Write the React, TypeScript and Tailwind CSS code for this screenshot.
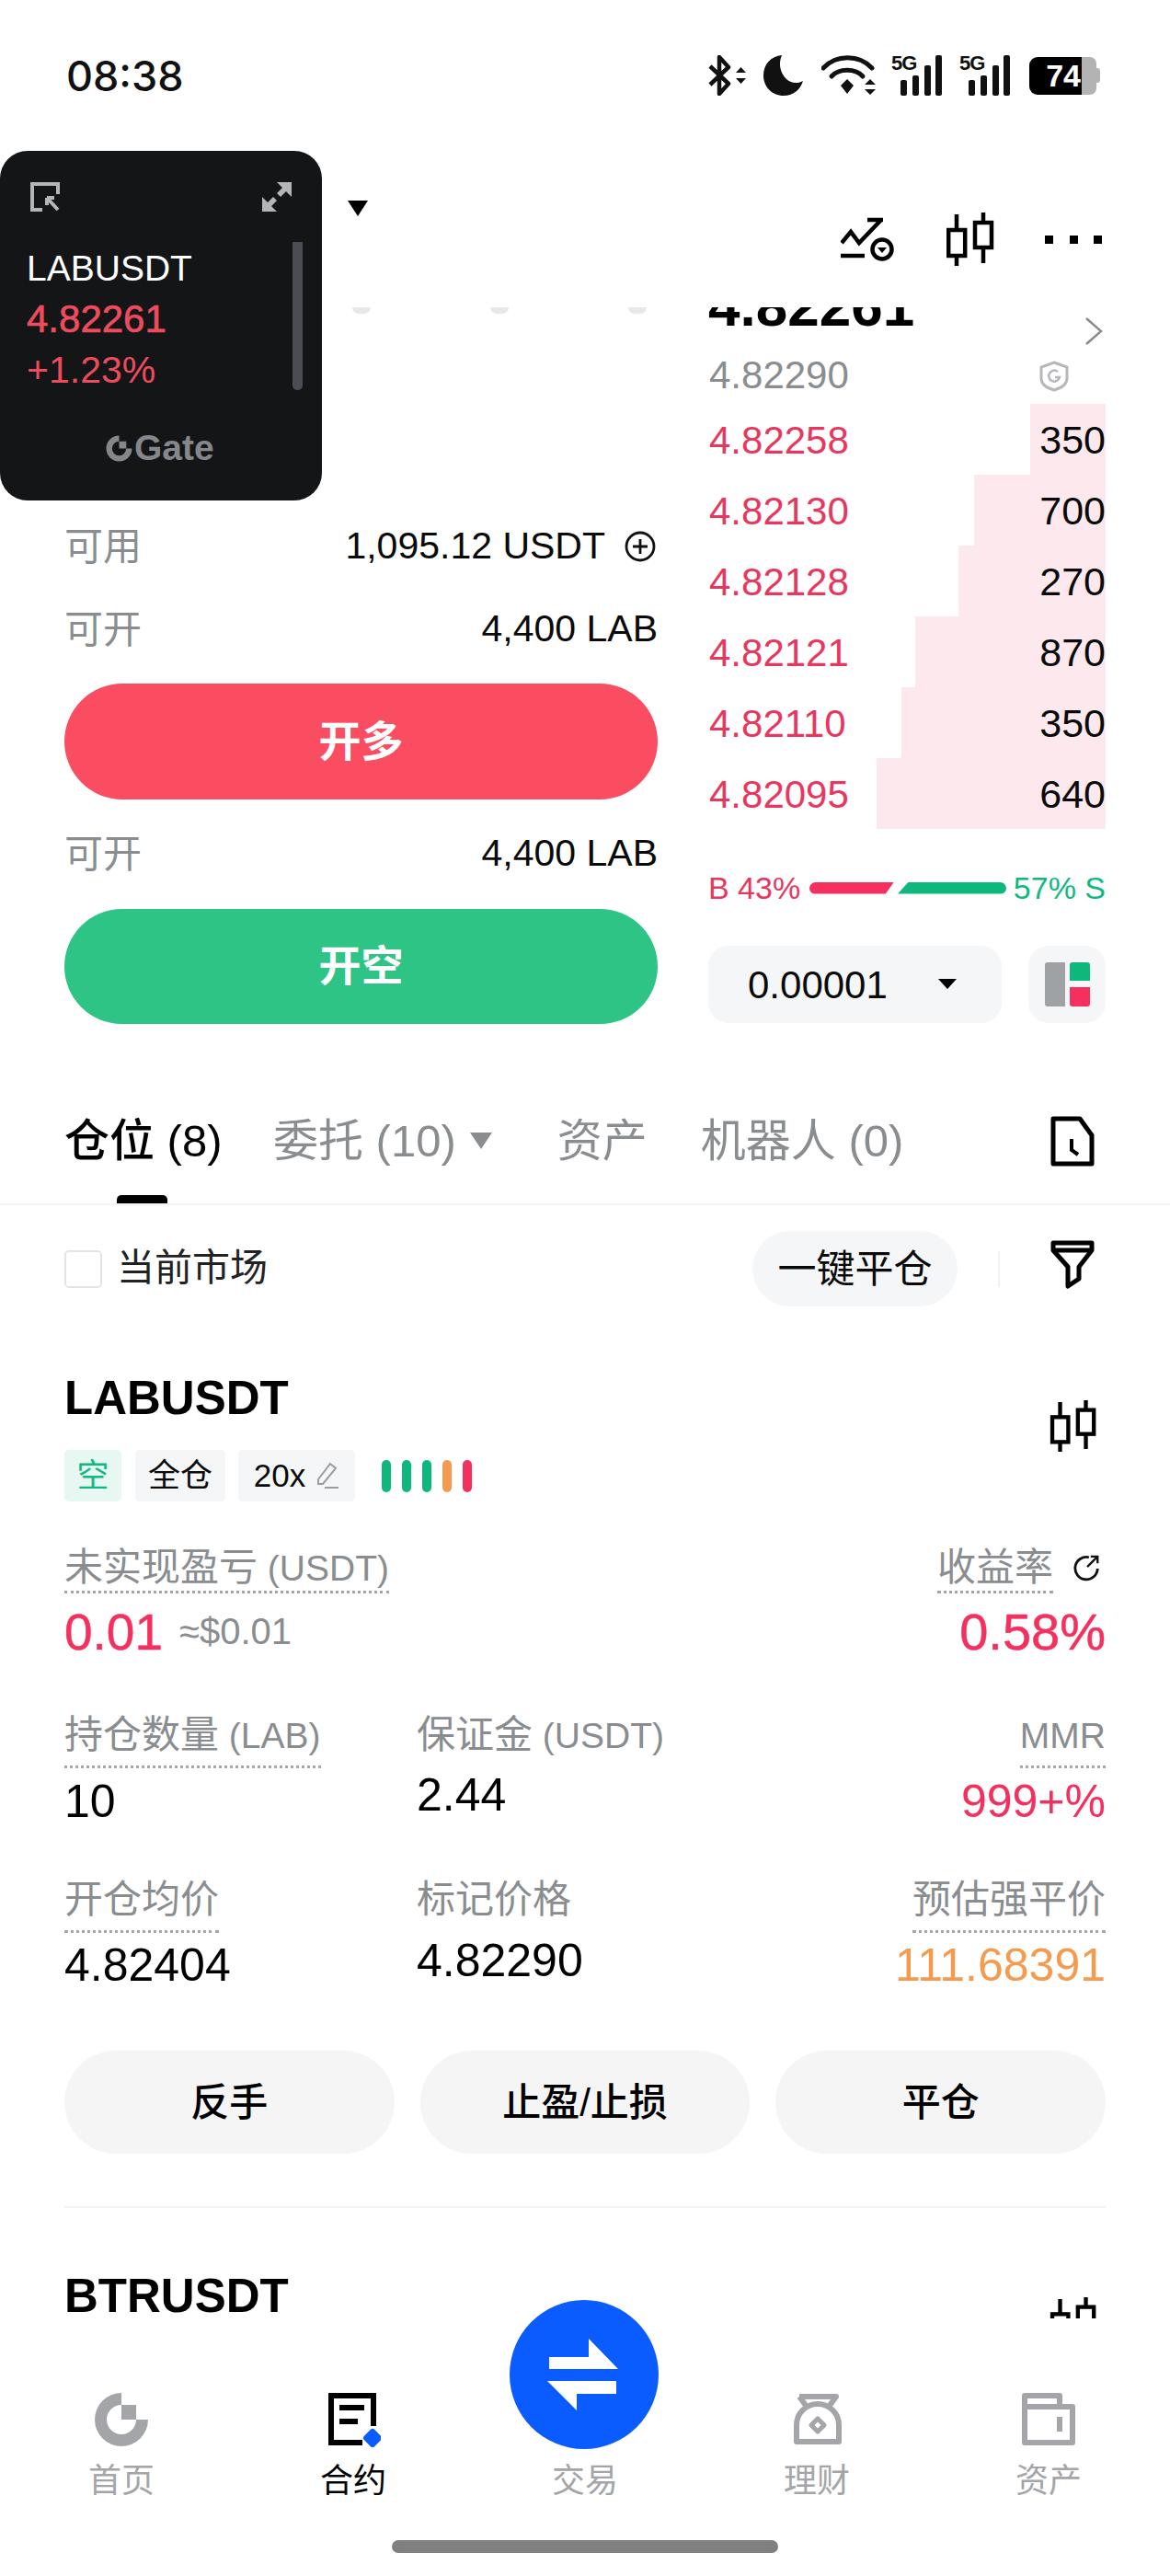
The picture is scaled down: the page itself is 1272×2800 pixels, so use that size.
import React from "react";

const asks = [
  { price: "4.82258", qty: "350", width: 82 },
  { price: "4.82130", qty: "700", width: 143 },
  { price: "4.82128", qty: "270", width: 160 },
  { price: "4.82121", qty: "870", width: 207 },
  { price: "4.82110", qty: "350", width: 222 },
  { price: "4.82095", qty: "640", width: 249 },
];

function Candles({ className }: { className: string }) {
  return (
    <svg viewBox="0 0 52 58" className={className} fill="none" stroke="#000" strokeWidth="4.5">
      <path d="M11 2V58M40 0V55" />
      <rect x="2.2" y="19" width="18" height="28" fill="#fff" />
      <rect x="31" y="11" width="18" height="27" fill="#fff" />
    </svg>
  );
}

function GateMark({ className, fill }: { className: string; fill: string }) {
  return (
    <svg viewBox="0 0 60 60" className={className} fill={fill}>
      <path d="M30 1A29 29 0 1 0 59 30H46A16 16 0 1 1 30 14Z" />
      <rect x="30" y="14" width="16" height="16" />
    </svg>
  );
}

function Signal() {
  return (
    <div className="flex h-[44px] w-[55px] flex-col">
      <span className="h-[18px] w-[27px] text-[22px] leading-[18px] font-bold tracking-[-1px] text-[#111]">5G</span>
      <svg viewBox="0 0 55 44" className="-mt-[18px] h-[44px] w-[55px]" fill="#111">
        <rect x="10" y="27" width="7" height="17" rx="2" />
        <rect x="23" y="22" width="7" height="22" rx="2" />
        <rect x="36" y="11" width="7" height="33" rx="2" />
        <rect x="48" y="0" width="7" height="44" rx="2" />
      </svg>
    </div>
  );
}

function StatusBar() {
  return (
    <div className="flex h-[164px] items-center justify-between pl-[72px] pr-[76px]">
      <span className="text-[45px] leading-none font-medium text-[#111] [font-family:Inter,sans-serif]">08:38</span>
      <div className="flex items-center">
        <svg viewBox="0 0 42 44" className="h-[44px] w-[42px]" fill="none" stroke="#111" strokeWidth="4.5">
          <path d="M2 12L22 31L12 42V2L22 13L2 32" strokeLinejoin="round" />
          <path d="M30 19L35.5 13L41 19ZM30 25L35.5 31L41 25Z" fill="#111" stroke="none" />
        </svg>
        <svg viewBox="0 0 43 44" className="ml-[18px] h-[44px] w-[43px]" fill="#111">
          <path d="M20 0C8 1 0 10 0 22C0 34 9 44 22 44C32 44 40 38 43 28C38 31 30 31 25 26C18 19 16 9 20 0Z" />
        </svg>
        <svg viewBox="0 0 59 44" className="ml-[20px] h-[44px] w-[59px]" fill="none" stroke="#111" strokeWidth="5" strokeLinecap="round">
          <path d="M2 14C16 -1 41 -1 55 14" />
          <path d="M11 23C19 14 37 14 45 23" />
          <path d="M28 26L35 33L28 42L21 33Z" fill="#111" stroke="none" />
          <path d="M47 32L53 26L59 32ZM47 37L53 43L59 37Z" fill="#111" stroke="none" />
        </svg>
        <div className="ml-[17px]"><Signal /></div>
        <div className="ml-[19px]"><Signal /></div>
        <div className="ml-[21px] flex h-[41px] w-[77px] items-center">
          <div className="flex h-[41px] w-[57px] items-center justify-end rounded-l-[9px] bg-black pr-[1px] text-[34px] leading-none font-bold text-white">74</div>
          <div className="h-[41px] w-[16px] rounded-r-[7px] bg-[#b3b3b3]" />
          <div className="h-[16px] w-[4px] rounded-r-[3px] bg-[#b3b3b3]" />
        </div>
      </div>
    </div>
  );
}

function Toolbar() {
  return (
    <div className="flex h-[170px] items-start justify-between pl-[378px] pr-[74px]">
      <svg viewBox="0 0 22 17" className="mt-[54px] h-[17px] w-[22px]"><path d="M0 0H22L11 17Z" fill="#000" /></svg>
      <div className="mt-[67px] flex items-center">
        <svg viewBox="0 0 58 48" className="h-[48px] w-[58px]" fill="none" stroke="#000" strokeWidth="4.5">
          <path d="M1 28L11 16L20 28L43 4M29 3H46" />
          <path d="M0 42H26" />
          <circle cx="45" cy="35" r="10.5" />
          <path d="M40 33H50L45 39Z" fill="#000" stroke="none" />
        </svg>
        <Candles className="ml-[57px] h-[58px] w-[52px]" />
        <div className="ml-[55px] flex w-[62px] justify-between">
          <div className="size-[9px] bg-black" />
          <div className="size-[9px] bg-black" />
          <div className="size-[9px] bg-black" />
        </div>
      </div>
    </div>
  );
}

function FloatCard() {
  return (
    <div className="absolute top-[164px] left-0 h-[380px] w-[350px] rounded-[30px] bg-[#141517]">
      <div className="flex justify-between pt-[34px] pr-[33px] pl-[33px]">
        <svg viewBox="0 0 32 32" className="size-[32px]" fill="none" stroke="#b4b5b7" strokeWidth="4">
          <path d="M13 30H2V2H30V13" />
          <path d="M18 17H26M18 17V25M18 17L30 30" />
        </svg>
        <svg viewBox="0 0 32 32" className="size-[32px]" fill="#b4b5b7">
          <path d="M16 0H32V16L26 10L20 16L16 12L22 6Z" />
          <path d="M0 32V16L6 22L12 16L16 20L10 26L16 32Z" />
        </svg>
      </div>
      <div className="mt-[38px] flex justify-between pr-[21px] pl-[29px]">
        <div>
          <div className="text-[39px] leading-[48px] text-white">LABUSDT</div>
          <div className="mt-[7px] text-[42px] leading-[48px] text-[#ec4c5e] [-webkit-text-stroke:0.7px_#ec4c5e]">4.82261</div>
          <div className="mt-[7px] text-[41px] leading-[48px] text-[#ec4c5e]">+1.23%</div>
        </div>
        <div className="-mt-[5px] h-[161px] w-[11px] rounded-b-[5px] bg-[#4a4d54]" />
      </div>
      <div className="absolute top-[304px] left-[115px] flex items-center">
        <GateMark className="size-[29px]" fill="#85878a" />
        <span className="ml-[2px] text-[39px] leading-[38px] font-bold text-[#85878a]">Gate</span>
      </div>
    </div>
  );
}

function TradeForm() {
  return (
    <div className="w-[645px]">
      <div className="flex h-[8px] gap-[130px] pl-[313px]">
        <div className="h-[7px] w-[20px] rounded-b-full bg-[#e8e8e9]" />
        <div className="h-[7px] w-[20px] rounded-b-full bg-[#e8e8e9]" />
        <div className="h-[7px] w-[20px] rounded-b-full bg-[#e8e8e9]" />
      </div>
      <div className="mt-[222px] flex h-[60px] items-center justify-between text-[41px]">
        <span className="text-[42px] text-[#8a8d90]">可用</span>
        <div className="flex items-center">
          <span className="text-[#0a0a0a]">1,095.12 USDT</span>
          <svg viewBox="0 0 34 34" className="mr-[2px] ml-[21px] size-[34px]" fill="none" stroke="#111" strokeWidth="2.8">
            <circle cx="17" cy="17" r="15" />
            <path d="M17 9V25M9 17H25" />
          </svg>
        </div>
      </div>
      <div className="mt-[30px] flex h-[60px] items-center justify-between text-[41px]">
        <span className="text-[42px] text-[#8a8d90]">可开</span>
        <span className="text-[#0a0a0a]">4,400 LAB</span>
      </div>
      <div className="mt-[29px] flex h-[126px] items-center justify-center rounded-full bg-[#fb4d62] text-[46px] font-bold text-white">开多</div>
      <div className="mt-[29px] flex h-[60px] items-center justify-between text-[41px]">
        <span className="text-[42px] text-[#8a8d90]">可开</span>
        <span className="text-[#0a0a0a]">4,400 LAB</span>
      </div>
      <div className="mt-[30px] flex h-[125px] items-center justify-center rounded-full bg-[#2ec486] text-[46px] font-bold text-white">开空</div>
    </div>
  );
}

function OrderBook() {
  return (
    <div className="w-[432px]">
      <div className="flex h-[41px] items-start justify-between">
        <div className="h-[22px] overflow-hidden">
          <div className="-mt-[36px] text-[62px] leading-[70px] font-bold text-black">4.82261</div>
        </div>
        <svg viewBox="0 0 20 32" className="mt-[10px] mr-[3px] h-[32px] w-[20px]" fill="none" stroke="#8a8d90" strokeWidth="2.5">
          <path d="M2 2L18 16L2 30" />
        </svg>
      </div>
      <div className="flex h-[64px] items-center justify-between">
        <span className="ml-[1px] text-[42px] text-[#8a8d90]">4.82290</span>
        <svg viewBox="0 0 32 34" className="mt-[4px] mr-[40px] h-[34px] w-[32px]" fill="none" stroke="#b5b7ba" strokeWidth="3">
          <path d="M16 2L30 7V19C30 26 23 30 16 32C9 30 2 26 2 19V7Z" />
          <path d="M20 12A6 6 0 1 0 22 18H17" strokeWidth="2.5" />
        </svg>
      </div>
      {asks.map((row) => (
        <div key={row.price} className="relative flex h-[77px] items-center justify-between pt-[2px] pl-[1px] text-[42px]">
          <div className="absolute inset-y-0 right-0 bg-[#fde9ed]" style={{ width: row.width }} />
          <span className="relative text-[#e8375f]">{row.price}</span>
          <span className="relative text-[43px] text-[#0a0a0a]">{row.qty}</span>
        </div>
      ))}
      <div className="mt-[44px] flex h-[40px] items-center text-[34px] leading-none">
        <span className="w-[110px] text-[#e8375f]">B 43%</span>
        <div className="h-[13px] w-[92px] rounded-l-full bg-[#f5305f] [clip-path:polygon(0_0,100%_0,90%_100%,0_100%)]" />
        <div className="ml-[4px] h-[13px] w-[118px] rounded-r-full bg-[#0eb87c] [clip-path:polygon(10%_0,100%_0,100%_100%,0_100%)]" />
        <span className="ml-auto text-[#10b981]">57% S</span>
      </div>
      <div className="mt-[43px] flex gap-[29px]">
        <div className="flex h-[84px] w-[319px] items-center rounded-[22px] bg-[#f5f6f7] pl-[43px] text-[42px] text-[#0a0a0a]">
          0.00001
          <svg viewBox="0 0 20 12" className="ml-[55px] h-[12px] w-[20px]"><path d="M0 0H20L10 11Z" fill="#000" /></svg>
        </div>
        <div className="flex h-[84px] w-[84px] items-center justify-center gap-[5px] rounded-[22px] bg-[#f5f6f7]">
          <div className="h-[48px] w-[22px] rounded-l-[3px] bg-[#9fa2a5]" />
          <div className="flex h-[48px] w-[22px] flex-col justify-between">
            <div className="h-[20px] rounded-t-[3px] bg-[#0eb87c]" />
            <div className="h-[21px] rounded-b-[3px] bg-[#f5305f]" />
          </div>
        </div>
      </div>
    </div>
  );
}

function Tabs() {
  return (
    <div className="relative flex h-[197px] items-center border-b-2 border-[#f2f3f4] pt-[59px] pr-[82px] pl-[70px] text-[49px] leading-none text-[#8a8d90]">
      <span className="w-[227px] font-medium text-black">仓位 (8)</span>
      <span>委托 (10)</span>
      <svg viewBox="0 0 24 18" className="ml-[15px] h-[18px] w-[24px]"><path d="M0 0H24L12 18Z" fill="#8a8d90" /></svg>
      <span className="ml-[71px]">资产</span>
      <span className="ml-[58px]">机器人 (0)</span>
      <svg viewBox="0 0 48 55" className="ml-auto h-[55px] w-[48px]" fill="none" stroke="#000" strokeWidth="5">
        <path d="M3 3H32L45 21V52H3Z" strokeLinejoin="round" />
        <path d="M23 25V37L30 42" strokeWidth="4" />
      </svg>
      <div className="absolute bottom-0 left-[127px] h-[9px] w-[55px] rounded-t-[5px] bg-black" />
    </div>
  );
}

function FilterRow() {
  return (
    <div className="flex items-center pt-[28px] pr-[82px] pl-[70px]">
      <div className="h-[41px] w-[41px] rounded-[5px] border-2 border-[#e2e4e6]" />
      <span className="ml-[16px] text-[41px] text-[#222]">当前市场</span>
      <div className="ml-auto flex h-[82px] w-[223px] items-center justify-center rounded-full bg-[#f5f6f7] text-[42px] text-[#0a0a0a]">一键平仓</div>
      <div className="mr-[55px] ml-[44px] h-[39px] w-[2px] bg-[#f0f1f2]" />
      <svg viewBox="0 0 48 53" className="-mt-[10px] h-[53px] w-[48px]" fill="none" stroke="#000" strokeWidth="5" strokeLinejoin="round">
        <path d="M3 3H45V11L31 29V42L19 50V29L3 11Z" />
        <path d="M3 11H45" />
      </svg>
    </div>
  );
}

function Label({ text, unit, tall, dotted = true }: { text?: string; unit?: string; tall?: boolean; dotted?: boolean }) {
  return (
    <span className={`inline-block ${tall ? "h-[60px]" : "h-[52px]"} ${dotted ? "border-b-[3px] border-dotted border-[#a3a5a8]" : ""} text-[42px] leading-[48px] whitespace-nowrap text-[#8a8d90]`}>
      {text}
      {unit && <span className="text-[39px]">{text ? " " : ""}{unit}</span>}
    </span>
  );
}

function Position() {
  return (
    <div className="px-[70px]">
      <div className="mt-[70px] flex items-start justify-between">
        <div>
          <div className="text-[51px] leading-[60px] font-bold text-black">LABUSDT</div>
          <div className="mt-[26px] flex h-[56px] items-center text-[35px] text-[#0a0a0a]">
            <div className="flex h-[56px] w-[62px] items-center justify-center rounded-[5px] bg-[#e6f8f1] text-[#10b981]">空</div>
            <div className="ml-[15px] flex h-[56px] w-[98px] items-center justify-center rounded-[5px] bg-[#f5f6f7]">全仓</div>
            <div className="ml-[14px] flex h-[56px] w-[127px] items-center justify-center gap-[9px] rounded-[5px] bg-[#f5f6f7]">
              20x
              <svg viewBox="0 0 28 30" className="h-[30px] w-[28px]" fill="none" stroke="#9a9c9f" strokeWidth="2">
                <path d="M18 2L24 7L10 24H5V19ZM12 28H27" />
              </svg>
            </div>
            <div className="ml-[29px] flex gap-[12px]">
              <div className="h-[35px] w-[10px] rounded-full bg-[#0eb87c]" />
              <div className="h-[35px] w-[10px] rounded-full bg-[#0eb87c]" />
              <div className="h-[35px] w-[10px] rounded-full bg-[#0eb87c]" />
              <div className="h-[35px] w-[10px] rounded-full bg-[#f59b50]" />
              <div className="h-[35px] w-[10px] rounded-full bg-[#f5305f]" />
            </div>
          </div>
        </div>
        <Candles className="mt-[32px] mr-[9px] h-[56px] w-[52px]" />
      </div>

      <div className="mt-[48px] flex justify-between">
        <div>
          <Label text="未实现盈亏" unit="(USDT)" />
          <div className="mt-[10px] flex h-[64px] items-center text-[55px] text-[#f5305f] [-webkit-text-stroke:0.5px_#f5305f]">
            0.01
            <span className="mt-[-2px] ml-[18px] text-[40px] text-[#8a8d90] [-webkit-text-stroke:0]">≈$0.01</span>
          </div>
        </div>
        <div className="text-right">
          <div className="flex items-start">
            <Label text="收益率" />
            <svg viewBox="0 0 32 32" className="mt-[9px] mr-[5px] ml-[22px] size-[30px]" fill="none" stroke="#111" strokeWidth="3">
              <path d="M18 4A13 13 0 1 0 28 17" />
              <path d="M16 15L28 3M20 3H28V11" strokeWidth="2.5" />
            </svg>
          </div>
          <div className="mt-[10px] h-[64px] text-[56px] leading-[64px] text-[#f5305f] [-webkit-text-stroke:0.5px_#f5305f]">0.58%</div>
        </div>
      </div>

      <div className="mt-[56px] grid grid-cols-[383px_1fr_1fr]">
        <div>
          <Label tall text="持仓数量" unit="(LAB)" />
          <div className="mt-[8px] h-[56px] text-[50px] leading-[56px] text-black">10</div>
        </div>
        <div>
          <Label tall dotted={false} text="保证金" unit="(USDT)" />
          <div className="mt-[1px] h-[56px] text-[50px] leading-[56px] text-black">2.44</div>
        </div>
        <div className="text-right">
          <Label tall unit="MMR" />
          <div className="mt-[8px] h-[56px] text-[50px] leading-[56px] text-[#f5305f]">999+%</div>
        </div>
      </div>

      <div className="mt-[55px] grid grid-cols-[383px_1fr_1fr]">
        <div>
          <Label tall text="开仓均价" />
          <div className="mt-[7px] h-[56px] text-[50px] leading-[56px] text-black">4.82404</div>
        </div>
        <div>
          <Label tall dotted={false} text="标记价格" />
          <div className="mt-[2px] h-[56px] text-[50px] leading-[56px] text-black">4.82290</div>
        </div>
        <div className="text-right">
          <Label tall text="预估强平价" />
          <div className="mt-[7px] h-[56px] text-[50px] leading-[56px] text-[#f59b50]">111.68391</div>
        </div>
      </div>

      <div className="mt-[65px] grid grid-cols-3 gap-[28px] text-[42px] font-medium text-black">
        {["反手", "止盈/止损", "平仓"].map((label) => (
          <div key={label} className="flex h-[112px] items-center justify-center rounded-full bg-[#f5f5f5]">{label}</div>
        ))}
      </div>

      <div className="mt-[57px] h-[2px] bg-[#f2f3f4]" />

      <div className="mt-[66px] flex items-start justify-between">
        <div className="text-[51px] leading-[60px] font-bold text-black">BTRUSDT</div>
        <Candles className="mt-[31px] mr-[9px] h-[56px] w-[52px]" />
      </div>
    </div>
  );
}

function BottomNav() {
  return (
    <div className="absolute inset-x-0 bottom-0 h-[280px] bg-white pt-[80px]">
      <div className="absolute -top-[20px] left-[554px] flex size-[162px] items-center justify-center rounded-full bg-[#0a5cff]">
        <svg viewBox="0 0 162 162" className="size-[162px]" fill="#fff">
          <path d="M86 42L118 75H43V62H86Z" />
          <path d="M116 88V102H73V120L41 88Z" />
        </svg>
      </div>
      <div className="grid grid-cols-5 px-[6px] text-center text-[36px] leading-[40px] text-[#a3a5a8]">
        <div className="flex flex-col items-center">
          <GateMark className="size-[60px]" fill="#a3a5a8" />
          <span className="mt-[17px]">首页</span>
        </div>
        <div className="flex flex-col items-center">
          <svg viewBox="0 0 60 60" className="size-[60px]" fill="none" stroke="#000" strokeWidth="6">
            <path d="M52 37V4H6V55H40" />
            <path d="M15 17H42M15 32H35" />
            <rect x="43" y="42" width="16" height="16" rx="3" fill="#0a5cff" stroke="none" transform="rotate(45 51 50)" />
          </svg>
          <span className="mt-[17px] text-black">合约</span>
        </div>
        <div className="flex flex-col items-center">
          <div className="size-[60px]" />
          <span className="mt-[17px]">交易</span>
        </div>
        <div className="flex flex-col items-center">
          <svg viewBox="0 0 60 60" className="size-[60px]" fill="none" stroke="#a3a5a8" strokeWidth="6" strokeLinejoin="round">
            <path d="M8 54V36A23 23 0 0 1 54 36V54Z" />
            <path d="M11 5H51L43 16M11 5L19 16" />
            <rect x="26" y="31" width="10" height="10" strokeWidth="5" transform="rotate(45 31 36)" />
          </svg>
          <span className="mt-[17px]">理财</span>
        </div>
        <div className="flex flex-col items-center">
          <svg viewBox="0 0 60 60" className="size-[60px]" fill="none" stroke="#a3a5a8" strokeWidth="6" strokeLinejoin="round">
            <path d="M4 55V4H42V16H56V55Z" />
            <path d="M4 16H42" />
            <path d="M42 27V43" />
          </svg>
          <span className="mt-[17px]">资产</span>
        </div>
      </div>
      <div className="mx-auto mt-[44px] h-[14px] w-[420px] rounded-full bg-[#808080]" />
    </div>
  );
}

export default function App() {
  return (
    <main className="relative h-[2800px] w-[1272px] overflow-hidden bg-white [font-family:'Liberation_Sans','Noto_Sans_CJK_SC',sans-serif]">
      <StatusBar />
      <Toolbar />
      <section className="flex items-start justify-between pr-[70px] pl-[70px]">
        <TradeForm />
        <OrderBook />
      </section>
      <Tabs />
      <FilterRow />
      <Position />
      <FloatCard />
      <BottomNav />
    </main>
  );
}
